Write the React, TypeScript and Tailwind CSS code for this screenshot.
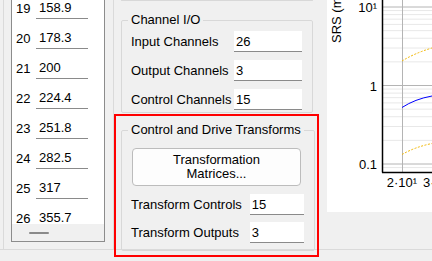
import React from 'react';

const LIST_ROWS = [
    { n: 19, v: '158.9' },
    { n: 20, v: '178.3' },
    { n: 21, v: '200' },
    { n: 22, v: '224.4' },
    { n: 23, v: '251.8' },
    { n: 24, v: '282.5' },
    { n: 25, v: '317' },
    { n: 26, v: '355.7' },
];

const CHANNELS = [
    { label: 'Input Channels', value: '26' },
    { label: 'Output Channels', value: '3' },
    { label: 'Control Channels', value: '15' },
];

const TRANSFORMS = [
    { label: 'Transform Controls', value: '15' },
    { label: 'Transform Outputs', value: '3' },
];

function Field({ value, className }: { value: string; className: string }) {
    return (
        <div className={`h-[21px] bg-white border-b border-[#8a8a8a] pl-[2px] flex items-center ${className}`}>
            {value}
        </div>
    );
}

// log-scale chart, decades at 10 / 1 / 0.1
function SrsChart() {
    const decades = [7, 85.5, 164];
    const span = 78.5;
    const minors: number[] = [];
    decades.forEach((y) => {
        for (let k = 2; k <= 9; k++) {
            const yy = y - Math.log10(k) * span;
            if (yy > 0) minors.push(yy);
        }
    });
    minors.push(164 + (1 - Math.log10(9)) * span);

    return (
        <svg width="105" height="212" viewBox="0 0 105 212" className="block">
            {minors.map((y, i) => (
                <line key={i} x1="55" x2="105" y1={y} y2={y} stroke="#e8e8e8" strokeWidth="1" />
            ))}
            {decades.map((y) => (
                <line key={y} x1="55" x2="105" y1={y} y2={y} stroke="#b4b4b4" strokeWidth="1" />
            ))}
            <line x1="75.5" x2="75.5" y1="0" y2="172" stroke="#b4b4b4" strokeWidth="1" />

            <path d="M75 61 Q88 53 105 48" fill="none" stroke="#f2b600" strokeWidth="1" strokeDasharray="2 1.5" />
            <path d="M75 107.5 Q88 99 105 96" fill="none" stroke="#0000ff" strokeWidth="1" />
            <path d="M75 154.5 Q88 147 105 143.5" fill="none" stroke="#f2b600" strokeWidth="1" strokeDasharray="2 1.5" />

            <line x1="55.5" x2="55.5" y1="0" y2="172.5" stroke="#000" strokeWidth="1.5" />
            <line x1="55" x2="105" y1="172.5" y2="172.5" stroke="#000" strokeWidth="1.5" />

            <g fontFamily="'Liberation Sans', Arial, sans-serif" fontSize="13" fill="#000">
                <text x="50" y="12" textAnchor="end">10¹</text>
                <text x="50" y="91" textAnchor="end">1</text>
                <text x="50" y="169" textAnchor="end">0.1</text>
                <text x="75" y="187" textAnchor="middle">2·10¹</text>
                <text x="96" y="187">3·10¹</text>
                <text transform="translate(14 43) rotate(-90)">SRS (m/s²)</text>
            </g>
        </svg>
    );
}

export default function App() {
    return (
        <div
            className="relative w-[432px] h-[261px] overflow-hidden bg-[#f0f0f0] text-[13px] leading-[15px] text-black"
            style={{ fontFamily: "'Liberation Sans', Arial, sans-serif" }}
        >
            <div className="flex h-[250px] border-b border-[#dadada]">
                {/* Left: breakpoint list */}
                <div className="ml-[3px] w-[111px] h-full border-x border-[#dadada]">
                    <div className="ml-[7px] w-[94px] h-[242px] border-x border-b border-[#8c8c8c] flex flex-col">
                        <div className="flex-1 overflow-hidden bg-white">
                            <div className="-mt-[7px] flex flex-col">
                                {LIST_ROWS.map((r) => (
                                    <div key={r.n} className="h-[30px] flex items-center">
                                        <span className="w-[24px] pl-[4px]">{r.n}</span>
                                        <div className="w-[52px] h-[22px] bg-white border-b border-[#8a8a8a] pl-[3px] flex items-center">
                                            {r.v}
                                        </div>
                                    </div>
                                ))}
                            </div>
                        </div>
                        <div className="h-[17px] bg-[#f0f0f0]">
                            <div className="ml-[17px] mt-[8px] w-[20px] h-[2px] rounded-full bg-[#8a8a8a]" />
                        </div>
                    </div>
                </div>

                {/* Middle: settings */}
                <div className="ml-[7px] w-[192px] flex flex-col">
                    <div className="h-[5px] border-x border-b border-[#d8d8d8] rounded-b-[2px]" />

                    <fieldset className="mt-[11px] border border-[#d8d8d8] rounded-[2px] pl-[9px] pr-[10px] pb-[2px]">
                        <legend className="-ml-[3px] px-[3px] leading-[16px] whitespace-nowrap">Channel I/O</legend>
                        <div className="mt-[3px] flex flex-col gap-[8px]">
                            {CHANNELS.map((c) => (
                                <div key={c.label} className="flex items-center justify-between">
                                    <span>{c.label}</span>
                                    <Field value={c.value} className="w-[68px]" />
                                </div>
                            ))}
                        </div>
                    </fieldset>

                    <fieldset className="mt-[9px] border border-[#d8d8d8] rounded-[2px] pl-[9px] pr-[10px] pb-[7px]">
                        <legend className="-ml-[3px] px-[3px] leading-[16px] whitespace-nowrap">Control and Drive Transforms</legend>
                        <button className="mt-[10px] ml-[1px] w-[169px] h-[38px] rounded-[4px] border border-[#bcbcbc] bg-[#fdfdfd] leading-[14px] flex flex-col items-center justify-center">
                            <span>Transformation</span>
                            <span>Matrices...</span>
                        </button>
                        <div className="mt-[8px] flex flex-col gap-[7px]">
                            {TRANSFORMS.map((t) => (
                                <div key={t.label} className="flex items-center justify-between">
                                    <span>{t.label}</span>
                                    <Field value={t.value} className="w-[54px]" />
                                </div>
                            ))}
                        </div>
                    </fieldset>
                </div>

                {/* Right: SRS plot */}
                <div className="ml-[14px] w-[105px] h-[212px] bg-white overflow-hidden">
                    <SrsChart />
                </div>
            </div>

            {/* highlight annotation */}
            <div className="absolute left-[114px] top-[114px] w-[205px] h-[143px] border-2 border-[#ff0000] pointer-events-none" />
        </div>
    );
}
